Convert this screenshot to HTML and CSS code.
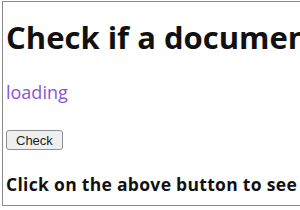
FILE: index.html
```html
<!DOCTYPE html>
<html lang="en">
<head>
    <meta charset="UTF-8">
    <title>Check if a document is ready</title>
    <link rel="stylesheet" href="styles.css">
</head>
<body>
    <div class="frame">
        <h1 class="title">Check if a document is ready</h1>
        <p class="status">loading</p>
        <button class="check-btn">Check</button>
        <h3 class="hint">Click on the above button to see the state of the document</h3>
    </div>
</body>
</html>
```

FILE: styles.css
```css
* {
    box-sizing: border-box;
    margin: 0;
    padding: 0;
}

body {
    background-color: #fff;
    font-family: 'Open Sans', 'Noto Sans', sans-serif;
    color: #111;
    overflow: hidden;
}

.frame {
    margin: 1px 0 0 2px;
    height: 205px;
    border: 1px solid #8a8a8a;
    border-right: none;
    padding: 15px 0 0 3px;
    white-space: nowrap;
    overflow: hidden;
}

.title {
    font-size: 31px;
    font-weight: 700;
    line-height: 40px;
}

.status {
    margin-top: 23px;
    font-size: 18px;
    color: #8a55d4;
    line-height: 24px;
}

.check-btn {
    margin-top: 26px;
    height: 20px;
    padding: 0 9px;
    font-family: 'Liberation Sans', Arial, sans-serif;
    font-size: 13px;
    color: #222;
    background-color: #efefef;
    border: 1px solid #8f8f8f;
    border-radius: 3px;
}

.hint {
    margin-top: 23px;
    font-size: 17.5px;
    font-weight: 700;
    letter-spacing: 0.3px;
    line-height: 22px;
}
```
